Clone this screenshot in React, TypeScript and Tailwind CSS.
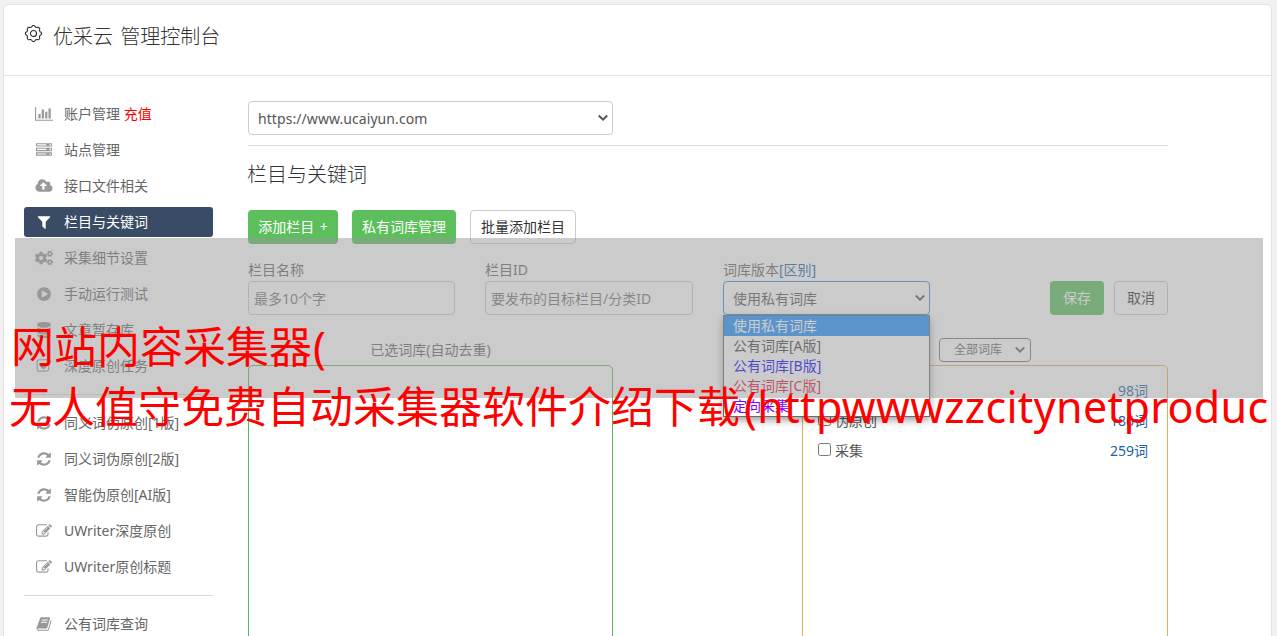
import type { ReactNode } from 'react';
import { FaCogs } from 'react-icons/fa';

const ICONS = {
  chart: 'M640 896v512h-256v-512h256zm384-512v1024h-256v-1024h256zm1024 1152v128h-2048v-1536h128v1408h1920zm-640-896v768h-256v-768h256zm384-384v1152h-256v-1152h256z',
  server: 'M128 1408h1024v-128h-1024v128zm0-512h1024v-128h-1024v128zm1568 448q0-40-28-68t-68-28-68 28-28 68 28 68 68 28 68-28 28-68zm-1568-960h1024v-128h-1024v128zm1568 448q0-40-28-68t-68-28-68 28-28 68 28 68 68 28 68-28 28-68zm0-512q0-40-28-68t-68-28-68 28-28 68 28 68 68 28 68-28 28-68zm96 832v384h-1792v-384h1792zm0-512v384h-1792v-384h1792zm0-512v384h-1792v-384h1792z',
  cloud: 'M1280 864q0-14-9-23l-352-352q-9-9-23-9t-23 9l-351 351q-10 12-10 24 0 14 9 23t23 9h224v352q0 13 9.5 22.5t22.5 9.5h192q13 0 22.5-9.5t9.5-22.5v-352h224q13 0 22.5-9.5t9.5-22.5zm640 288q0 159-112.5 271.5t-271.5 112.5h-1088q-185 0-316.5-131.5t-131.5-316.5q0-130 70-240t188-165q-2-30-2-43 0-212 150-362t362-150q156 0 285.5 87t188.5 231q71-62 166-62 106 0 181 75t75 181q0 76-41 138 130 31 213.5 135.5t83.5 238.5z',
  filter: 'M1595 295q17 41-14 70l-493 493v742q0 42-39 59-13 5-25 5-27 0-45-19l-256-256q-19-19-19-45v-486l-493-493q-31-29-14-70 17-39 59-39h1280q42 0 59 39z',
  play: 'M896 128q209 0 385.5 103t279.5 279.5 103 385.5-103 385.5-279.5 279.5-385.5 103-385.5-103-279.5-279.5-103-385.5 103-385.5 279.5-279.5 385.5-103zm384 823q32-18 32-55t-32-55l-544-320q-31-19-64-1-32 19-32 56v640q0 37 32 56 16 8 32 8 17 0 32-9z',
  database: 'M896 768q237 0 443-43t325-127v170q0 69-103 128t-280 93.5-385 34.5-385-34.5-280-93.5-103-128v-170q119 84 325 127t443 43zm0 768q237 0 443-43t325-127v170q0 69-103 128t-280 93.5-385 34.5-385-34.5-280-93.5-103-128v-170q119 84 325 127t443 43zm0-384q237 0 443-43t325-127v170q0 69-103 128t-280 93.5-385 34.5-385-34.5-280-93.5-103-128v-170q119 84 325 127t443 43zm0-1152q208 0 385 34.5t280 93.5 103 128v128q0 69-103 128t-280 93.5-385 34.5-385-34.5-280-93.5-103-128v-128q0-69 103-128t280-93.5 385-34.5z',
  check: 'M1472 930v318q0 119-84.5 203.5t-203.5 84.5h-832q-119 0-203.5-84.5t-84.5-203.5v-832q0-119 84.5-203.5t203.5-84.5h832q63 0 117 25 15 7 18 23 3 17-9 29l-49 49q-10 10-23 10-3 0-9-2-23-6-45-6h-832q-66 0-113 47t-47 113v832q0 66 47 113t113 47h832q66 0 113-47t47-113v-254q0-13 9-22l64-64q10-10 23-10 6 0 12 3 20 8 20 29zm231-489l-814 814q-24 24-57 24t-57-24l-430-430q-24-24-24-57t24-57l110-110q24-24 57-24t57 24l263 263 647-647q24-24 57-24t57 24l110 110q24 24 24 57t-24 57z',
  refresh: 'M1639 1056q0 5-1 7-64 268-268 434.5t-478 166.5q-146 0-282.5-55t-243.5-157l-129 129q-19 19-45 19t-45-19-19-45v-448q0-26 19-45t45-19h448q26 0 45 19t19 45-19 45l-137 137q71 66 161 102t187 36q134 0 250-65t186-179q11-17 53-117 8-23 30-23h192q13 0 22.5 9.5t9.5 22.5zm25-800v448q0 26-19 45t-45 19h-448q-26 0-45-19t-19-45 19-45l138-138q-148-137-349-137-134 0-250 65t-186 179q-11 17-53 117-8 23-30 23h-199q-13 0-22.5-9.5t-9.5-22.5v-7q65-268 270-434.5t480-166.5q146 0 284 55.5t245 156.5l130-129q19-19 45-19t45 19 19 45z',
  edit: 'M888 1184l116-116-152-152-116 116v56h96v96h56zm440-720q-16-16-33 1l-350 350q-17 17-1 33t33-1l350-350q17-17 1-33zm80 594v190q0 119-84.5 203.5t-203.5 84.5h-832q-119 0-203.5-84.5t-84.5-203.5v-832q0-119 84.5-203.5t203.5-84.5h832q63 0 117 25 15 7 18 23 3 17-9 29l-49 49q-14 14-32 8-23-6-45-6h-832q-66 0-113 47t-47 113v832q0 66 47 113t113 47h832q66 0 113-47t47-113v-126q0-13 9-22l64-64q15-15 35-7t20 29zm-96-738l288 288-672 672h-288v-288zm444 132l-92 92-288-288 92-92q28-28 68-28t68 28l152 152q28 28 28 68t-28 68z',
  book: 'M1703 478q40 57 18 129l-275 906q-19 64-76.5 107.5t-122.5 43.5h-923q-77 0-148.5-53.5t-99.5-131.5q-24-67-2-127 0-4 3-27t4-37q1-8-3-21.5t-3-19.5q2-11 8-21t16.5-23.5 16.5-23.5q23-38 45-91.5t30-91.5q3-10 .5-30t-.5-28q3-11 17-28t17-23q21-36 42-92t25-90q1-9-2.5-32t.5-28q4-13 22-30.5t22-22.5q19-26 42.5-84.5t27.5-96.5q1-8-3-25.5t-2-26.5q2-8 9-18t18-23 17-21q8-12 16.5-30.5t15-35 16-36 19.5-32 26.5-23.5 36-11.5 47.5 5.5l-1 3q38-9 51-9h761q74 0 114 56t18 130l-274 906q-36 119-71.5 153.5t-128.5 34.5h-869q-27 0-38 15-11 16-1 43 24 70 144 70h923q29 0 56-15.5t35-41.5l300-987q7-22 5-57 38 15 59 43zm-1064 2q-4 13 2 22.5t20 9.5h608q13 0 25.5-9.5t16.5-22.5l21-64q4-13-2-22.5t-20-9.5h-608q-13 0-25.5 9.5t-16.5 22.5zm-83 256q-4 13 2 22.5t20 9.5h608q13 0 25.5-9.5t16.5-22.5l21-64q4-13-2-22.5t-20-9.5h-608q-13 0-25.5 9.5t-16.5 22.5z',
};

type IconName = keyof typeof ICONS | 'cogs';

interface MenuItem {
  icon: IconName;
  label: string;
  extra?: string;
  active?: boolean;
}

const MENU: MenuItem[][] = [
  [
    { icon: 'chart', label: '账户管理', extra: '充值' },
    { icon: 'server', label: '站点管理' },
    { icon: 'cloud', label: '接口文件相关' },
    { icon: 'filter', label: '栏目与关键词', active: true },
    { icon: 'cogs', label: '采集细节设置' },
    { icon: 'play', label: '手动运行测试' },
    { icon: 'database', label: '文章暂存库' },
    { icon: 'check', label: '深度原创任务' },
  ],
  [
    { icon: 'refresh', label: '同义词伪原创[1版]' },
    { icon: 'refresh', label: '同义词伪原创[2版]' },
    { icon: 'refresh', label: '智能伪原创[AI版]' },
    { icon: 'edit', label: 'UWriter深度原创' },
    { icon: 'edit', label: 'UWriter原创标题' },
  ],
  [{ icon: 'book', label: '公有词库查询' }],
];

const OPTIONS = [
  { label: '使用私有词库', cls: 'bg-[#1e90ff] text-white' },
  { label: '公有词库[A版]', cls: 'text-[#444]' },
  { label: '公有词库[B版]', cls: 'text-[#0000ff]' },
  { label: '公有词库[C版]', cls: 'text-[#dc143c]' },
  { label: '定向采集', cls: 'text-[#8000ff]' },
];

const WORDS = [
  { label: '自媒体', count: '98词' },
  { label: '伪原创', count: '186词' },
  { label: '采集', count: '259词' },
];

// 齒輪外框：8 個圓齒
const GEAR = Array.from({ length: 96 }, (_, i) => {
  const a = (i / 96) * Math.PI * 2;
  const r = 7.75 + 0.7 * Math.tanh(1.8 * Math.cos(a * 8));
  return `${(10 + r * Math.cos(a)).toFixed(2)},${(10 + r * Math.sin(a)).toFixed(2)}`;
}).join(' ');

function Icon({ name }: { name: IconName }) {
  if (name === 'cogs') return <FaCogs size={18} />;
  const wide = name === 'chart' || name === 'cloud';
  return (
    <svg
      viewBox={name === 'chart' ? '0 0 2048 1792' : name === 'cloud' ? '0 0 1920 1792' : '0 0 1792 1792'}
      className={wide ? 'h-4 w-[18px]' : 'size-4'}
      fill="currentColor"
    >
      <path d={ICONS[name]} />
    </svg>
  );
}

function Chevron() {
  return (
    <svg viewBox="0 0 10 8" className="h-2 w-2.5 shrink-0" fill="none" stroke="currentColor" strokeWidth="2">
      <path d="M.8 1.5 5 5.7l4.2-4.2" />
    </svg>
  );
}

function Field({ label, link, children }: { label: string; link?: string; children: ReactNode }) {
  return (
    <div>
      <div className="h-[23px] leading-[23px] text-[#666]">
        {label}
        {link && <span className="text-[#1b62a5]">{link}</span>}
      </div>
      {children}
    </div>
  );
}

function Sidebar() {
  return (
    <nav className="w-[189px] shrink-0 pt-[23px]">
      {MENU.map((group, gi) => (
        <div key={gi} className={gi > 0 ? 'mt-[13px] border-t border-[#ddd] pt-[13px]' : ''}>
          {group.map((item) => (
            <a
              key={item.label}
              className={`mb-1.5 flex h-[30px] items-center rounded-[3px] pl-[9px] whitespace-nowrap ${
                item.active ? 'bg-[#3a4b66] text-white' : 'text-[#666]'
              }`}
            >
              <span className={`flex w-[22px] justify-center ${item.active ? 'text-white' : 'text-[#999]'}`}>
                <Icon name={item.icon} />
              </span>
              <span className="ml-[9px]">
                {item.label}
                {item.extra && <span className="text-[#f00]"> {item.extra}</span>}
              </span>
            </a>
          ))}
        </div>
      ))}
    </nav>
  );
}

export default function App() {
  return (
    <div className="relative h-[636px] w-[1277px] overflow-hidden bg-[#f1f1f1] pt-1 pl-[3px] font-['Noto_Sans','Noto_Sans_CJK_SC',sans-serif] text-sm">
      <div className="h-[700px] w-[1269px] rounded-[5px] border border-[#e3e3e3] bg-white">
        <header className="flex h-[71px] items-start border-b border-[#e5e5e5] pt-4 pl-5 text-[#333]">
          <svg viewBox="0 0 20 20" className="mt-[3px] size-[19px]" fill="none" stroke="currentColor" strokeWidth="1.2">
            <polygon points={GEAR} strokeLinejoin="round" />
            <circle cx="10" cy="10" r="3.2" />
          </svg>
          <h1 className="ml-2.5 text-xl leading-8 font-light whitespace-nowrap [word-spacing:2px]">优采云 管理控制台</h1>
        </header>

        <div className="flex pl-5">
          <Sidebar />

          <main className="ml-[35px] w-[920px] pt-[25px]">
            <div className="flex h-[34px] w-[365px] items-center justify-between rounded border border-[#ccc] pr-[4px] pl-[9px] text-[#555]">
              <span className="pt-px tracking-[0.07px]">https://www.ucaiyun.com</span>
              <Chevron />
            </div>
            <div className="mt-2.5 border-t border-[#ddd]" />
            <h2 className="-ml-px mt-[13px] text-xl leading-8 font-light text-[#333]">栏目与关键词</h2>

            <div className="mt-[19px] flex gap-3.5">
              <button className="h-[34px] w-[90px] rounded bg-[#5cbf5c] whitespace-nowrap text-white [word-spacing:2px]">添加栏目 +</button>
              <button className="h-[34px] w-[104px] rounded bg-[#5cbf5c] whitespace-nowrap text-white">私有词库管理</button>
              <button className="h-[34px] w-[106px] rounded border border-[#ccc] whitespace-nowrap text-[#333]">批量添加栏目</button>
            </div>

            <div className="mt-3.5 flex items-end">
              <Field label="栏目名称">
                <div className="flex h-[34px] w-[207px] items-center rounded border border-[#aaa]/60 pt-0.5 pl-[5px] text-[#777]">最多10个字</div>
              </Field>
              <div className="ml-[30px]">
                <Field label="栏目ID">
                  <div className="flex h-[34px] w-[208px] items-center rounded border border-[#aaa]/60 pt-0.5 pl-[5px] text-[#777]">要发布的目标栏目/分类ID</div>
                </Field>
              </div>
              <div className="relative ml-[30px]">
                <Field label="词库版本" link="[区别]">
                  <div className="flex h-[34px] w-[207px] items-center justify-between rounded border border-[#3a8bdd] pr-[4px] pl-[9px] text-[#555]">
                    <span className="pt-0.5">使用私有词库</span>
                    <Chevron />
                  </div>
                </Field>
                <div className="absolute top-full left-0 z-10 w-[207px] border border-[#6b6b6b] bg-white shadow-[0_3px_8px_rgba(0,0,0,0.4)]">
                  {OPTIONS.map((o) => (
                    <div key={o.label} className={`h-5 pl-[9px] leading-5 ${o.cls}`}>
                      {o.label}
                    </div>
                  ))}
                </div>
              </div>
              <button className="ml-[120px] h-[34px] w-[54px] rounded bg-[#5cbf5c] text-white">保存</button>
              <button className="ml-2.5 h-[34px] w-[54px] rounded border border-[#ccc] text-[#333]">取消</button>
            </div>

            <div className="mt-[23px] flex justify-between">
              <div className="w-[365px]">
                <div className="h-[27px] text-center leading-6 text-[#666]">已选词库(自动去重)</div>
                <div className="h-[320px] rounded-[5px] border border-[#5cb85c]" />
              </div>
              <div className="w-[366px]">
                <div className="flex h-[27px] pl-[137px]">
                  <div className="flex h-6 w-[92px] items-center justify-between rounded border border-[#767676] pr-[5px] pl-3.5 text-xs text-[#666]">
                    全部词库
                    <Chevron />
                  </div>
                </div>
                <div className="h-[320px] rounded-[5px] border border-[#f0ad4e] pt-2.5 pr-[19px] pl-[15px]">
                  {WORDS.map((w) => (
                    <label key={w.label} className="flex h-[30px] items-center text-[#555]">
                      <span className="mb-[3px] size-[13px] rounded-[2.5px] border border-[#767676] bg-white" />
                      <span className="ml-1">{w.label}</span>
                      <span className="ml-auto text-[#1b62a5]">{w.count}</span>
                    </label>
                  ))}
                </div>
              </div>
            </div>
          </main>
        </div>
      </div>

      {/* 半透明遮罩與紅色標題，浮在整個頁面之上 */}
      <div className="absolute top-[238px] left-[15px] z-20 h-[160px] w-[1248px] bg-[#979797]/50" />
      <div className="absolute top-[317px] left-[9px] z-30 text-[43px] leading-[60px] whitespace-nowrap text-[#f00]">
        <p className="pl-0.5">
          网站内容采集器<span className="ml-px">(</span>
        </p>
        <p>
          无人值守免费自动采集器软件介绍下载<span className="ml-1 tracking-[0.35px]">(httpwwwzzcitynetproduc</span>
        </p>
      </div>
    </div>
  );
}
